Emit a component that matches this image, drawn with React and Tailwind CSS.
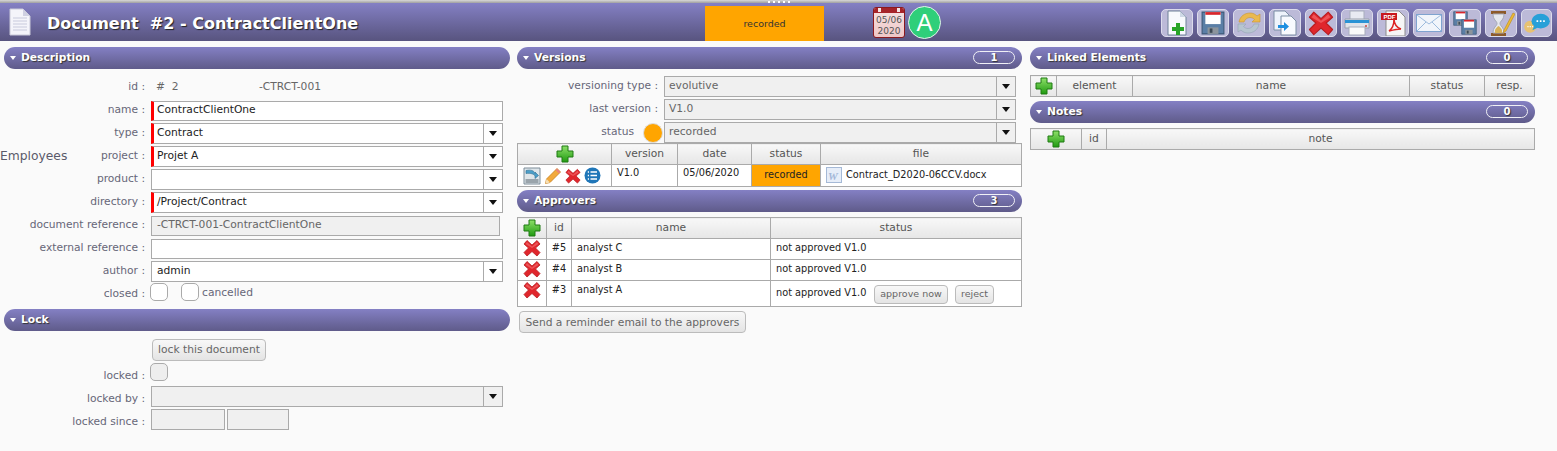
import React from "react";

const Plus = ({ size = 18 }) => (
  <svg width={size} height={size} viewBox="0 0 18 18">
    <defs>
      <linearGradient id="plusG" x1="0" y1="0" x2="0" y2="1">
        <stop offset="0" stopColor="#8ee06a" />
        <stop offset="1" stopColor="#1f9a10" />
      </linearGradient>
    </defs>
    <path d="M6 1h6v5h5v6h-5v5H6v-5H1V6h5z" fill="url(#plusG)" stroke="#1e7a12" strokeWidth="1" />
  </svg>
);

const RedX = ({ size = 18 }) => (
  <svg width={size} height={size} viewBox="0 0 18 18">
    <path d="M4 1.500 9 6l5-4.500L17 5l-4.500 4L17 13.500 14 17 9 12.500 4 17 1 13.500 5.500 9 1 5z" fill="#e0262c" stroke="#b81c20" strokeWidth="0.8" strokeLinejoin="round" />
    <path d="M4 3 9 7.500 14 3l1.500 2L9 9 2.500 5z" fill="#f3666a" opacity="0.7" />
  </svg>
);

const Pencil = () => (
  <svg width="18" height="18" viewBox="0 0 18 18">
    <path d="M13 1.500 16.500 5 6 15.500 1.500 16.500 2.500 12z" fill="#f2a93b" stroke="#c77d1c" strokeWidth="0.8" />
    <path d="M13 1.500 16.500 5 15 6.500 11.500 3z" fill="#e8837c" />
    <path d="M2.500 12 6 15.500 1.500 16.500z" fill="#f5dfb4" />
  </svg>
);

const ListCircle = () => (
  <svg width="17" height="17" viewBox="0 0 17 17">
    <circle cx="8.500" cy="8.500" r="8" fill="#1f76b8" />
    <path d="M6.500 5h6.500M6.500 8.500h6.500M6.500 12h6.500M3.800 5h1.200M3.800 8.500h1.200M3.800 12h1.200" stroke="#fff" strokeWidth="1.700" />
  </svg>
);

const Restore = () => (
  <svg width="18" height="18" viewBox="0 0 18 18">
    <path d="M1 1h16v16H1z" fill="#dfe6ea" stroke="#7c8c98" />
    <rect x="2.500" y="12" width="13" height="4" fill="#9aa4ab" />
    <path d="M3 3.500c5-1 8 0 9 3V5l3.500 3.500L12 11.500V9C11 7 8 6 3 6.500z" fill="#4b9fc9" stroke="#2f6f94" strokeWidth="0.6" />
  </svg>
);

const WordDoc = () => (
  <svg width="16" height="16" viewBox="0 0 16 16">
    <rect x="0.500" y="0.500" width="15" height="15" fill="#e6edf8" stroke="#a5b9d6" />
    <text x="2" y="12.500" fontSize="11" fontFamily="Liberation Serif" fontStyle="italic" fontWeight="700" fill="#a4b8d8">W</text>
  </svg>
);

const DocPage = ({ w = 22, h = 28 }) => (
  <svg width={w} height={h} viewBox="0 0 22 28">
    <path d="M1 1h13l7 7v19H1z" fill="#f4f4fa" stroke="#c9c9d8" />
    <path d="M14 1v7h7z" fill="#cfd0e2" />
    <path d="M4 10h14M4 13h14M4 16h14M4 19h14M4 22h14" stroke="#c8cadc" strokeWidth="1.200" />
  </svg>
);

const Floppy = ({ x = 0, y = 0, s = 22 }) => (
  <svg x={x} y={y} width={s} height={s} viewBox="0 0 22 22">
    <path d="M1 1h20v20H1z" fill="#5b7fa6" stroke="#3f5a78" />
    <rect x="4" y="1" width="14" height="11" fill="#fff" />
    <rect x="4" y="1" width="14" height="2.500" fill="#d8262c" />
    <rect x="6" y="15" width="10" height="6" fill="#8c949c" />
    <rect x="8" y="16" width="2.500" height="4" fill="#3e4a55" />
  </svg>
);

const ToolIcon = ({ name }) => {
  if (name === "new")
    return (
      <svg width="20" height="26" viewBox="0 0 20 26">
        <path d="M1 1h12l6 6v18H1z" fill="#f7f9fd" stroke="#6f8198" />
        <path d="M13 1v6h6z" fill="#cfd9e6" />
        <path d="M9 13h4v4h4v4h-4v4H9v-4H5v-4h4z" fill="#28a428" />
      </svg>
    );
  if (name === "save")
    return <svg width="24" height="24"><Floppy s={24} /></svg>;
  if (name === "refresh")
    return (
      <svg width="26" height="24" viewBox="0 0 26 24">
        <path d="M3 11C4 5 9 2 14 2c3 0 5 1 7 3l3-2v8h-8l2.500-2.500C17 7 15.500 6.500 14 6.500c-3 0-5 2-6 4.500z" fill="#eab94e" stroke="#c9962f" strokeWidth="0.6" />
        <path d="M23 13c-1 6-6 9-11 9-3 0-5-1-7-3l-3 2v-8h8l-2.500 2.500C9 17 10.500 17.500 12 17.500c3 0 5-2 6-4.500z" fill="#b7c5d0" stroke="#93a5b3" strokeWidth="0.6" />
      </svg>
    );
  if (name === "copy")
    return (
      <svg width="24" height="26" viewBox="0 0 24 26">
        <path d="M1 1h11l4 4v15H1z" fill="#eef3fb" stroke="#7d8fa5" />
        <path d="M8 6h10l5 5v14H8z" fill="#f8fafe" stroke="#7d8fa5" />
        <path d="M5 15h6v-3l5 4.500L11 21v-3H5z" fill="#1e8fe0" />
      </svg>
    );
  if (name === "delete") return <RedX size={26} />;
  if (name === "print")
    return (
      <svg width="28" height="26" viewBox="0 0 28 26">
        <rect x="7" y="1" width="14" height="9" fill="#e8eaf2" stroke="#a8adbc" />
        <path d="M2 9h24v9H2z" fill="#dfe3ea" stroke="#9aa1ad" />
        <rect x="2" y="10" width="24" height="3" fill="#2a93d5" />
        <rect x="6" y="17" width="16" height="8" fill="#fafafa" stroke="#a8adbc" />
        <circle cx="23" cy="16" r="1" fill="#c44" />
      </svg>
    );
  if (name === "pdf")
    return (
      <svg width="26" height="27" viewBox="0 0 26 27">
        <path d="M6 1h13l6 6v19H6z" fill="#f6f6f6" stroke="#8d8d8d" />
        <rect x="1" y="3" width="16" height="7" fill="#c8171d" />
        <text x="3.500" y="9" fontSize="6" fontWeight="700" fill="#fff" fontFamily="Liberation Sans">PDF</text>
        <path d="M9 21c3-2 5-7 5-12 0 5 3 9 7 10-4 0-8 1-12 2z" fill="none" stroke="#d22" strokeWidth="1.500" />
      </svg>
    );
  if (name === "mail")
    return (
      <svg width="26" height="18" viewBox="0 0 26 18">
        <rect x="0.500" y="0.500" width="25" height="17" fill="#f1f5fb" stroke="#7fa3cf" />
        <path d="M1 1l12 9 12-9M1 17l9-9M25 17l-9-9" fill="none" stroke="#9dbbdd" />
      </svg>
    );
  if (name === "saveAll")
    return (
      <svg width="24" height="24">
        <Floppy s={15} />
        <Floppy x={8} y={8} s={16} />
      </svg>
    );
  if (name === "hourglass")
    return (
      <svg width="28" height="27" viewBox="0 0 28 27">
        <rect x="4" y="1" width="15" height="3" fill="#8c5a2b" />
        <rect x="4" y="23" width="15" height="3" fill="#8c5a2b" />
        <path d="M6 4h11c0 6-4 7-4 9.500s4 3.500 4 9.500H6c0-6 4-7 4-9.500S6 10 6 4z" fill="#e4e7ee" stroke="#a4a8b5" />
        <path d="M8 20c1-2 2-3 3.500-4 1.500 1 2.500 2 3.500 4v3H8z" fill="#d8b35a" />
        <path d="M26 3 17 20l-1 3 3-2L28 4z" fill="#eebb33" stroke="#b98a1e" strokeWidth="0.6" />
      </svg>
    );
  return (
    <svg width="28" height="22" viewBox="0 0 30 24">
      <circle cx="7.500" cy="16" r="6.500" fill="#e8c271" />
      <path d="M4.500 16h6" stroke="#fff" strokeWidth="1.300" strokeDasharray="1.300 1.200" />
      <ellipse cx="19" cy="10" rx="10" ry="8" fill="#28a0d8" />
      <path d="M12 15l-2 5 6-3z" fill="#28a0d8" />
      <path d="M14.500 10h9" stroke="#fff" strokeWidth="1.800" strokeDasharray="1.800 1.800" />
    </svg>
  );
};

const Calendar = () => (
  <div className="w-[32px] h-[31px] rounded-[3px] border border-[#8b1a1f] bg-gradient-to-b from-[#f6e4e4] to-[#eec6c6] flex flex-col items-center overflow-hidden">
    <div className="w-full h-[5px] shrink-0 bg-[#a6242a] flex justify-between px-[4px]">
      <span className="w-[3px] h-[4px] bg-[#f4e6e6]" />
      <span className="w-[3px] h-[4px] bg-[#f4e6e6]" />
    </div>
    <div className="text-[9px] leading-[11px] text-[#555] mt-[2px]">05/06</div>
    <div className="text-[9px] leading-[11px] text-[#555]">2020</div>
  </div>
);

const SectionBar = ({ title, count, className = "" }) => (
  <div className={`h-[22px] rounded-full bg-gradient-to-b from-[#8480c4] to-[#5f5b8a] flex items-center pl-[5px] pr-[7px] ${className}`}>
    <svg width="6" height="4" viewBox="0 0 6 4" className="ml-[1px] mr-[5px]">
      <path d="M0 0h6L3 4z" fill="#fff" />
    </svg>
    <span className="text-[10.700px] font-bold text-white [text-shadow:1px_1px_1px_#333]">{title}</span>
    {count !== undefined && (
      <span className="ml-auto -mt-[2px] w-[42px] h-[13px] rounded-full border border-[#f0f0f5] text-[10px] leading-[11px] font-bold text-center text-white [text-shadow:1px_1px_1px_#333]">
        {count}
      </span>
    )}
  </div>
);

const Row = ({ label, note, colon = true, children, labelW = "w-[146px]", fieldClass = "" }) => (
  <div className="flex items-center h-[23px]">
    <div className={`${labelW} shrink-0 flex justify-between items-center pr-px text-[#666678]`}>
      {note ? <span className="text-[12.300px] text-[#5a5a6a]">{note}</span> : <span />}
      <span className="whitespace-nowrap">{label}{colon ? " :" : ""}</span>
    </div>
    <div className={`ml-[5px] flex-1 min-w-0 flex items-center ${fieldClass}`}>{children}</div>
  </div>
);

const Field = ({ value = "", required, select, disabled, tight, short, w = "w-[352px]" }) => (
  <div className={`${w} ${short ? "h-[20px]" : "h-[21px]"} shrink-0 flex items-center border border-[#aaa] ${required ? "border-l-[3px] border-l-[#ff0000]" : ""} ${disabled ? "bg-[#f0f0f0] text-[#666]" : "bg-white text-[#222]"}`}>
    <span className={`flex-1 truncate ${required ? "pl-[3px]" : tight ? "pl-[4px]" : "pl-[5px]"}`}>{value}</span>
    {select && (
      <span className="w-[19px] h-full border-l border-[#aaa] flex items-center justify-center">
        <svg width="8" height="5" viewBox="0 0 8 5">
          <path d="M0 0h8L4 5z" fill="#111" />
        </svg>
      </span>
    )}
  </div>
);

const Check = ({ disabled }) => (
  <span className={`inline-block w-[18px] h-[18px] rounded-[5px] border border-[#aaa] ${disabled ? "bg-[#eee]" : "bg-white"}`} />
);

const Btn = ({ children, className = "" }) => (
  <button className={`h-[22px] rounded-[4px] border border-[#bbb] bg-gradient-to-b from-[#f8f8f8] to-[#e4e4e4] text-[#666] text-[10.700px] whitespace-nowrap ${className}`}>
    {children}
  </button>
);

const Th = ({ children, w }) => (
  <th className={`${w} border border-[#aaa] bg-gradient-to-b from-[#f8f8f8] to-[#e6e6e6] font-normal text-[#555] text-center p-0`}>
    {children}
  </th>
);

const Td = ({ children, className = "" }) => (
  <td className={`border border-[#aaa] bg-white align-top text-[9.750px] text-[#222] p-0 ${className}`}>{children}</td>
);

const HeadPlus = () => (
  <span className="flex justify-center">
    <Plus />
  </span>
);

const toolbar = ["new", "save", "refresh", "copy", "delete", "print", "pdf", "mail", "saveAll", "hourglass"];

const approvers = [
  { id: "#5", name: "analyst C" },
  { id: "#4", name: "analyst B" },
  { id: "#3", name: "analyst A", pending: true },
];

export default function App() {
  return (
    <div className="w-[1557px] h-[451px] overflow-hidden bg-[#fafafa] text-[10.700px] font-['DejaVu_Sans',Verdana,sans-serif]">
      <div className="h-[3px] bg-gradient-to-b from-[#d8d8d8] to-[#a0a0a0] flex justify-center gap-[3px] pt-px">
        <span className="w-[2px] h-[2px] bg-white" />
        <span className="w-[2px] h-[2px] bg-white" />
        <span className="w-[2px] h-[2px] bg-white" />
        <span className="w-[2px] h-[2px] bg-white" />
        <span className="w-[2px] h-[2px] bg-white" />
      </div>
      <header className="h-[38px] bg-gradient-to-b from-[#8480c4] to-[#58547f] flex items-start">
        <div className="w-[47px] shrink-0 pl-[9px] pt-[5px]">
          <DocPage />
        </div>
        <h1 className="w-[658px] shrink-0 pt-[10px] text-[16px] leading-[22px] font-bold text-white whitespace-pre [text-shadow:1px_1px_1px_#222]">
          Document  #2 - ContractClientOne
        </h1>
        <div className="w-[119px] h-[35px] mt-[3px] pt-px shrink-0 bg-[#ffa500] text-[9.500px] text-[#333] flex items-center justify-center">
          recorded
        </div>
        <div className="ml-[49px] mt-[4px] shrink-0">
          <Calendar />
        </div>
        <div className="ml-[3px] mt-[3px] w-[33px] h-[33px] shrink-0 rounded-full bg-[#2fcf7a] border border-[#e6f5ec] text-white text-[24px] leading-[31px] text-center font-['Liberation_Sans',sans-serif]">
          A
        </div>
        <div className="ml-auto mr-[5px] mt-[6px] flex gap-[4px]">
          {toolbar.map((t) => (
            <div key={t} className="w-[32px] h-[28px] rounded-[5px] border border-[#dcdcec] bg-[#bcbad8] flex items-center justify-center overflow-hidden">
              <ToolIcon name={t} />
            </div>
          ))}
          <div className="w-[31px] h-[28px] rounded-[5px] border border-[#dcdcec] bg-[#bcbad8] flex items-center justify-center overflow-hidden">
            <ToolIcon name="chat" />
          </div>
        </div>
      </header>

      <div className="flex items-start pt-[6px]">
        <div className="w-[510px] shrink-0">
          <SectionBar title="Description" className="ml-[4px]" />
          <div className="pt-[7px]">
            <Row label="id">
              <span className="text-[#666] whitespace-pre pl-[5px] w-[108px]">#  2</span>
              <span className="text-[#666]">-CTRCT-001</span>
            </Row>
            <Row label="name"><Field value="ContractClientOne" required short /></Row>
            <Row label="type"><Field value="Contract" required select /></Row>
            <Row label="project" note="Employees"><Field value="Projet A" required select /></Row>
            <Row label="product"><Field select /></Row>
            <Row label="directory"><Field value="/Project/Contract" required select /></Row>
            <Row label="document reference"><Field value="-CTRCT-001-ContractClientOne" disabled short w="w-[349px]" /></Row>
            <Row label="external reference"><Field short /></Row>
            <Row label="author"><Field value="admin" select /></Row>
            <Row label="closed">
              <span className="-ml-px"><Check /></span>
              <span className="ml-[13px]"><Check /></span>
              <span className="ml-[3px] -mt-[3px] text-[#666678]">cancelled</span>
            </Row>
          </div>
          <SectionBar title="Lock" className="ml-[4px] mt-[3px]" />
          <div className="pt-[8px]">
            <div className="pl-[152px] h-[26px]">
              <Btn className="w-[114px]">lock this document</Btn>
            </div>
            <Row label="locked" fieldClass="mb-[4px]"><span className="-ml-px"><Check disabled /></span></Row>
            <Row label="locked by" fieldClass="mb-[6px]"><Field select disabled /></Row>
            <Row label="locked since" fieldClass="mb-[6px]">
              <Field disabled w="w-[74px]" />
              <span className="ml-[2px]"><Field disabled w="w-[62px]" /></span>
            </Row>
          </div>
        </div>

        <div className="w-[505px] shrink-0 ml-[7px]">
          <SectionBar title="Versions" count="1" />
          <div className="pt-[6px] -mb-px">
            <Row label="versioning type" labelW="w-[142px]"><Field value="evolutive" select disabled tight /></Row>
            <Row label="last version" labelW="w-[142px]"><Field value="V1.0" select disabled tight /></Row>
            <Row label="status" colon={false} labelW="w-[118px]">
              <span className="ml-[3px] mr-px w-[20px] h-[20px] rounded-full bg-[#ffa500] border border-[#ddd] shrink-0" />
              <Field value="recorded" select disabled tight />
            </Row>
          </div>
          <table className="w-[505px] border-collapse table-fixed">
            <thead>
              <tr className="h-[21px]">
                <Th w="w-[94px]"><HeadPlus /></Th>
                <Th w="w-[66px]">version</Th>
                <Th w="w-[74px]">date</Th>
                <Th w="w-[69px]">status</Th>
                <Th>file</Th>
              </tr>
            </thead>
            <tbody>
              <tr className="h-[22px]">
                <Td>
                  <div className="flex items-center pl-[5px] gap-[3px] h-[21px]">
                    <Restore />
                    <Pencil />
                    <RedX size={16} />
                    <ListCircle />
                  </div>
                </Td>
                <Td className="pl-[5px] pt-[1px]">V1.0</Td>
                <Td className="pl-[5px] pt-[1px]">05/06/2020</Td>
                <Td className="!bg-[#ffa500] text-center !align-middle">recorded</Td>
                <Td>
                  <div className="flex items-center gap-[4px] pl-[5px] h-[20px]">
                    <WordDoc />
                    <span>Contract_D2020-06CCV.docx</span>
                  </div>
                </Td>
              </tr>
            </tbody>
          </table>
          <SectionBar title="Approvers" count="3" className="mt-[3px]" />
          <table className="mt-[5px] w-[505px] border-collapse table-fixed">
            <thead>
              <tr className="h-[21px]">
                <Th w="w-[29px]"><HeadPlus /></Th>
                <Th w="w-[25px]">id</Th>
                <Th w="w-[199px]">name</Th>
                <Th>status</Th>
              </tr>
            </thead>
            <tbody>
              {approvers.map((a) => (
                <tr key={a.id} className={a.pending ? "h-[26px]" : "h-[21px]"}>
                  <Td className="text-center"><span className="flex justify-center"><RedX size={18} /></span></Td>
                  <Td className="text-center pt-[2px]">{a.id}</Td>
                  <Td className="pl-[5px] pt-[2px]">{a.name}</Td>
                  <Td className={a.pending ? "pl-[5px]" : "pl-[5px] pt-[2px]"}>
                    {a.pending ? (
                      <div className="flex items-center h-[25px]">
                        <span className="w-[98px] shrink-0 -mt-[1px]">not approved V1.0</span>
                        <Btn className="!h-[19px] w-[74px] !text-[9.500px] mt-[1px]">approve now</Btn>
                        <Btn className="!h-[19px] w-[39px] ml-[7px] !text-[9.500px] mt-[1px]">reject</Btn>
                      </div>
                    ) : (
                      "not approved V1.0"
                    )}
                  </Td>
                </tr>
              ))}
            </tbody>
          </table>
          <Btn className="w-[227px] ml-[2px] mt-[4px] pt-[2px]">Send a reminder email to the approvers</Btn>
        </div>

        <div className="w-[505px] shrink-0 ml-[8px]">
          <SectionBar title="Linked Elements" count="0" />
          <table className="mt-[6px] w-[505px] border-collapse table-fixed">
            <thead>
              <tr className="h-[21px]">
                <Th w="w-[26px]"><HeadPlus /></Th>
                <Th w="w-[76px]">element</Th>
                <Th w="w-[277px]">name</Th>
                <Th w="w-[75px]">status</Th>
                <Th>resp.</Th>
              </tr>
            </thead>
          </table>
          <SectionBar title="Notes" count="0" className="mt-[4px]" />
          <table className="mt-[5px] w-[505px] border-collapse table-fixed">
            <thead>
              <tr className="h-[21px]">
                <Th w="w-[51px]"><HeadPlus /></Th>
                <Th w="w-[25px]">id</Th>
                <Th>note</Th>
              </tr>
            </thead>
          </table>
        </div>
      </div>
    </div>
  );
}
